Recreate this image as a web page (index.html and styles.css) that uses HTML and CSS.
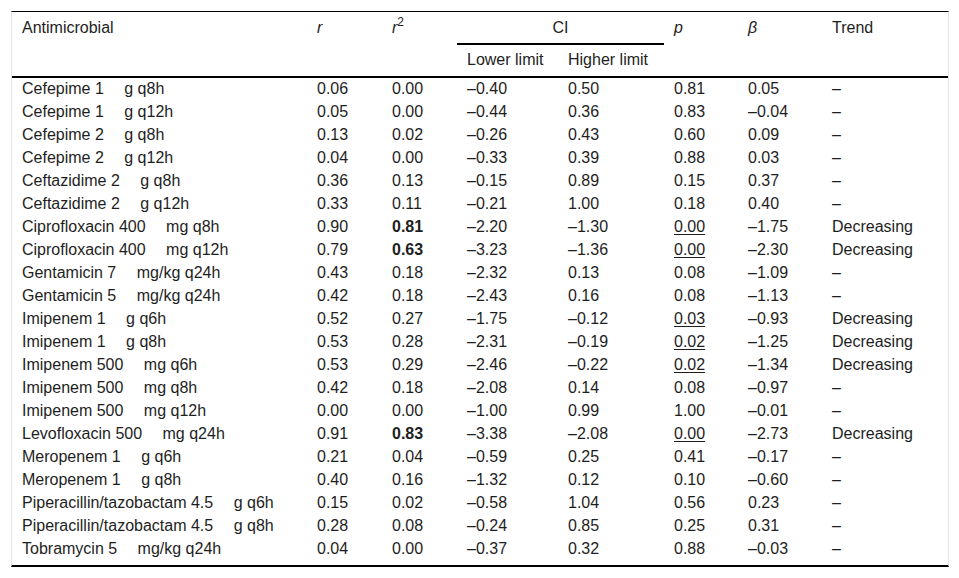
FILE: index.html
```html
<!DOCTYPE html>
<html>
<head>
<meta charset="utf-8">
<link rel="stylesheet" href="styles.css">
</head>
<body>
<div class="wrap">
<table class="data">
<colgroup>
<col class="c-name"><col class="c-r"><col class="c-r2"><col class="c-lo"><col class="c-hi"><col class="c-p"><col class="c-b"><col class="c-t">
</colgroup>
<thead>
<tr>
<th rowspan="2" class="span">Antimicrobial</th>
<th rowspan="2" class="span"><i>r</i></th>
<th rowspan="2" class="span"><i>r</i><sup>2</sup></th>
<th colspan="2" class="ci">CI</th>
<th rowspan="2" class="span"><i>p</i></th>
<th rowspan="2" class="span"><i>β</i></th>
<th rowspan="2" class="span">Trend</th>
</tr>
<tr>
<th class="sub">Lower limit</th>
<th class="sub">Higher limit</th>
</tr>
</thead>
<tbody>
<tr><td>Cefepime 1 &emsp;g q8h</td><td>0.06</td><td>0.00</td><td>–0.40</td><td>0.50</td><td>0.81</td><td>0.05</td><td>–</td></tr>
<tr><td>Cefepime 1 &emsp;g q12h</td><td>0.05</td><td>0.00</td><td>–0.44</td><td>0.36</td><td>0.83</td><td>–0.04</td><td>–</td></tr>
<tr><td>Cefepime 2 &emsp;g q8h</td><td>0.13</td><td>0.02</td><td>–0.26</td><td>0.43</td><td>0.60</td><td>0.09</td><td>–</td></tr>
<tr><td>Cefepime 2 &emsp;g q12h</td><td>0.04</td><td>0.00</td><td>–0.33</td><td>0.39</td><td>0.88</td><td>0.03</td><td>–</td></tr>
<tr><td>Ceftazidime 2 &emsp;g q8h</td><td>0.36</td><td>0.13</td><td>–0.15</td><td>0.89</td><td>0.15</td><td>0.37</td><td>–</td></tr>
<tr><td>Ceftazidime 2 &emsp;g q12h</td><td>0.33</td><td>0.11</td><td>–0.21</td><td>1.00</td><td>0.18</td><td>0.40</td><td>–</td></tr>
<tr><td>Ciprofloxacin 400 &emsp;mg q8h</td><td>0.90</td><td><b>0.81</b></td><td>–2.20</td><td>–1.30</td><td><u>0.00</u></td><td>–1.75</td><td>Decreasing</td></tr>
<tr><td>Ciprofloxacin 400 &emsp;mg q12h</td><td>0.79</td><td><b>0.63</b></td><td>–3.23</td><td>–1.36</td><td><u>0.00</u></td><td>–2.30</td><td>Decreasing</td></tr>
<tr><td>Gentamicin 7 &emsp;mg/kg q24h</td><td>0.43</td><td>0.18</td><td>–2.32</td><td>0.13</td><td>0.08</td><td>–1.09</td><td>–</td></tr>
<tr><td>Gentamicin 5 &emsp;mg/kg q24h</td><td>0.42</td><td>0.18</td><td>–2.43</td><td>0.16</td><td>0.08</td><td>–1.13</td><td>–</td></tr>
<tr><td>Imipenem 1 &emsp;g q6h</td><td>0.52</td><td>0.27</td><td>–1.75</td><td>–0.12</td><td><u>0.03</u></td><td>–0.93</td><td>Decreasing</td></tr>
<tr><td>Imipenem 1 &emsp;g q8h</td><td>0.53</td><td>0.28</td><td>–2.31</td><td>–0.19</td><td><u>0.02</u></td><td>–1.25</td><td>Decreasing</td></tr>
<tr><td>Imipenem 500 &emsp;mg q6h</td><td>0.53</td><td>0.29</td><td>–2.46</td><td>–0.22</td><td><u>0.02</u></td><td>–1.34</td><td>Decreasing</td></tr>
<tr><td>Imipenem 500 &emsp;mg q8h</td><td>0.42</td><td>0.18</td><td>–2.08</td><td>0.14</td><td>0.08</td><td>–0.97</td><td>–</td></tr>
<tr><td>Imipenem 500 &emsp;mg q12h</td><td>0.00</td><td>0.00</td><td>–1.00</td><td>0.99</td><td>1.00</td><td>–0.01</td><td>–</td></tr>
<tr><td>Levofloxacin 500 &emsp;mg q24h</td><td>0.91</td><td><b>0.83</b></td><td>–3.38</td><td>–2.08</td><td><u>0.00</u></td><td>–2.73</td><td>Decreasing</td></tr>
<tr><td>Meropenem 1 &emsp;g q6h</td><td>0.21</td><td>0.04</td><td>–0.59</td><td>0.25</td><td>0.41</td><td>–0.17</td><td>–</td></tr>
<tr><td>Meropenem 1 &emsp;g q8h</td><td>0.40</td><td>0.16</td><td>–1.32</td><td>0.12</td><td>0.10</td><td>–0.60</td><td>–</td></tr>
<tr><td>Piperacillin/tazobactam 4.5 &emsp;g q6h</td><td>0.15</td><td>0.02</td><td>–0.58</td><td>1.04</td><td>0.56</td><td>0.23</td><td>–</td></tr>
<tr><td>Piperacillin/tazobactam 4.5 &emsp;g q8h</td><td>0.28</td><td>0.08</td><td>–0.24</td><td>0.85</td><td>0.25</td><td>0.31</td><td>–</td></tr>
<tr><td>Tobramycin 5 &emsp;mg/kg q24h</td><td>0.04</td><td>0.00</td><td>–0.37</td><td>0.32</td><td>0.88</td><td>–0.03</td><td>–</td></tr>
</tbody>
</table>
</div>
</body>
</html>
```
FILE: styles.css
```css
html, body {
  margin: 0;
  padding: 0;
  background: #fff;
}
body {
  font-family: "Liberation Sans", Arial, sans-serif;
  font-size: 16px;
  color: #1e1e1e;
}
.wrap {
  margin: 11px 0 0 11px;
  width: 936px;
  border-top: 1px solid #000;
  border-bottom: 2px solid #000;
  border-left: 1px solid #e6e6e6;
  border-right: 1px solid #e6e6e6;
}
.data {
  width: 936px;
  table-layout: fixed;
  border-collapse: separate;
  border-spacing: 0;
}
.c-name { width: 295px; }
.c-r { width: 75px; }
.c-r2 { width: 75px; }
.c-lo { width: 101px; }
.c-hi { width: 106px; }
.c-p { width: 74px; }
.c-b { width: 84px; }
.c-t { width: 126px; }

.data th, .data td {
  padding: 1px 0 2px 10px;
  line-height: 20px;
  text-align: left;
  font-weight: normal;
  white-space: nowrap;
}
.data th.span {
  vertical-align: top;
  padding-top: 6px;
  border-bottom: 2px solid #000;
}
.data th.ci {
  text-align: center;
  padding: 6px 0 5px 0;
  border-bottom: 2px solid #000;
}
.data th.sub {
  padding-top: 5px;
  padding-bottom: 6px;
  border-bottom: 2px solid #000;
}
.data sup {
  font-size: 12px;
  line-height: 0;
  vertical-align: 7px;
}
.data td {
  height: 20px;
}
.data tbody tr:last-child td {
  padding-bottom: 6px;
}
.data b {
  font-weight: bold;
}
.data u {
  text-decoration: underline;
  text-underline-offset: 2px;
}
```
